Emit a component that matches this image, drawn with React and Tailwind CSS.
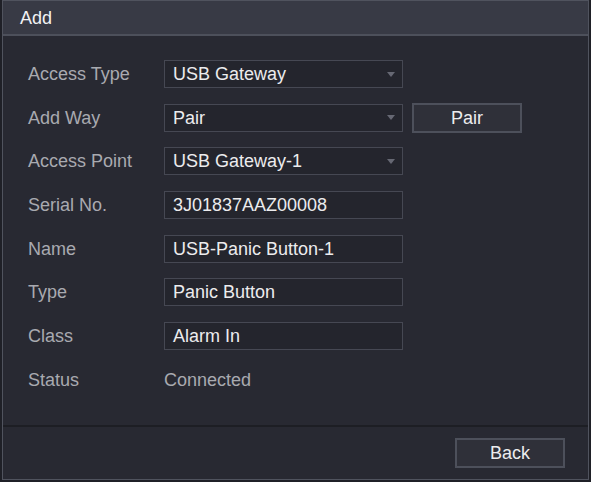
import React from "react";

const rows = [
  { label: "Access Type", value: "USB Gateway", select: true },
  { label: "Add Way", value: "Pair", select: true, button: "Pair" },
  { label: "Access Point", value: "USB Gateway-1", select: true },
  { label: "Serial No.", value: "3J01837AAZ00008" },
  { label: "Name", value: "USB-Panic Button-1" },
  { label: "Type", value: "Panic Button" },
  { label: "Class", value: "Alarm In" },
  { label: "Status", value: "Connected", plain: true },
];

const Field = ({ row }) => {
  if (row.plain) {
    return <span className="text-[#a9aab0]">{row.value}</span>;
  }
  return (
    <div className="flex items-center w-[239px] h-[28px] border border-[#464853] bg-[#24252d] pl-[8px] pr-[7px] text-[#ececee]">
      <span className="flex-1">{row.value}</span>
      {row.select && (
        <svg width="8" height="5" viewBox="0 0 8 5">
          <path d="M0 0h8L4 5z" fill="#666873" />
        </svg>
      )}
    </div>
  );
};

const Btn = ({ children }) => (
  <button className="w-[110px] h-[30px] border-2 border-[#4d505b] bg-[#2f3039] text-[#ececee]">
    {children}
  </button>
);

export default function App() {
  return (
    <div
      className="w-[591px] h-[482px] bg-[#1f2027] pl-[2px] pr-[2px] pb-[2px] text-[18px] leading-none"
      style={{ fontFamily: '"Liberation Sans", Arial, sans-serif' }}
    >
      <div className="h-full flex flex-col border border-[#50535e] bg-[#282932]">
        <div className="h-[35px] flex items-center pl-[17px] bg-[#383a45] border-b-2 border-[#4d505b] text-[#f2f2f4]">
          Add
        </div>
        <div className="flex-1 flex flex-col gap-[15.7px] pt-[24px] pl-[25px]">
          {rows.map((row) => (
            <div key={row.label} className="flex items-center h-[28px]">
              <span className="w-[136px] text-[#a9aab0]">{row.label}</span>
              <Field row={row} />
              {row.button && (
                <div className="ml-[9px]">
                  <Btn>{row.button}</Btn>
                </div>
              )}
            </div>
          ))}
        </div>
        <div className="h-[54px] flex items-center justify-end pr-[23px] border-t-2 border-[#1d1e24]">
          <Btn>Back</Btn>
        </div>
      </div>
    </div>
  );
}
